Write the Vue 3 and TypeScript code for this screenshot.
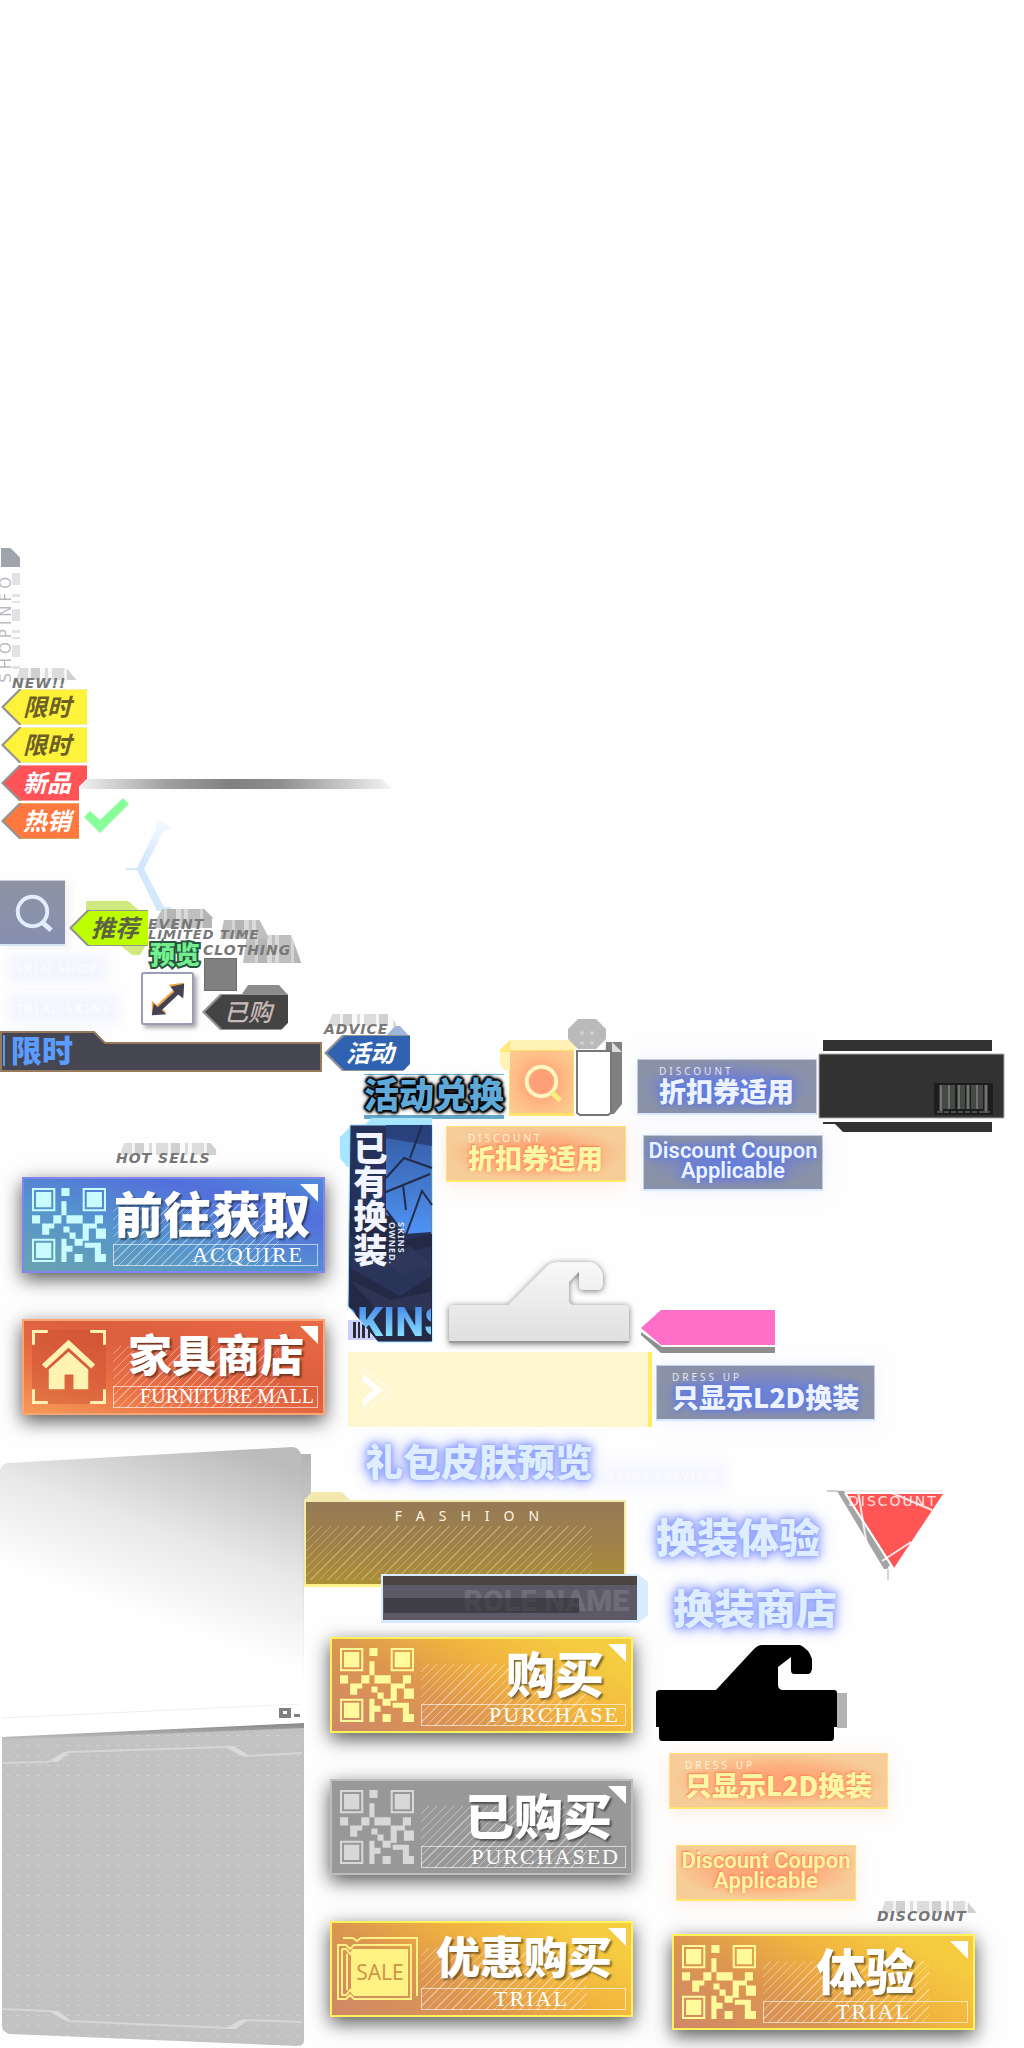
<script setup lang="ts">
interface ActionCard {
  title: string
  sub: string
  tone: 'blue' | 'red' | 'gold' | 'grey'
  emblem: 'qr' | 'home' | 'sale'
  fit: string
}

const leftCards: ActionCard[] = [
  { title: '前往获取', sub: 'ACQUIRE', tone: 'blue', emblem: 'qr', fit: 'end-near sub-far' },
  { title: '家具商店', sub: 'FURNITURE MALL', tone: 'red', emblem: 'home', fit: 'compact end-mid sub-tight' },
]
const middleCards: ActionCard[] = [
  { title: '购买', sub: 'PURCHASE', tone: 'gold', emblem: 'qr', fit: 'end-far' },
  { title: '已购买', sub: 'PURCHASED', tone: 'grey', emblem: 'qr', fit: 'end-mid' },
  { title: '优惠购买', sub: 'TRIAL', tone: 'gold', emblem: 'sale', fit: 'compact end-mid sub-center' },
]
const rightCards: ActionCard[] = [
  { title: '体验', sub: 'TRIAL', tone: 'gold', emblem: 'qr', fit: 'end-center sub-center' },
]
const cardColumns = [
  { name: 'left', cards: leftCards },
  { name: 'middle', cards: middleCards },
  { name: 'right', cards: rightCards },
]

const tags = [
  { text: '限时', tone: 'yellow' },
  { text: '限时', tone: 'yellow' },
  { text: '新品', tone: 'red' },
  { text: '热销', tone: 'orange' },
]

const coupons = [
  { place: 'coupon-a', tone: 'cool', label: 'DISCOUNT', title: '折扣券适用' },
  { place: 'coupon-b', tone: 'warm', label: 'DISCOUNT', title: '折扣券适用' },
  { place: 'coupon-c', tone: 'cool', label: '', title: 'Discount Coupon\nApplicable' },
  { place: 'coupon-d', tone: 'warm', label: '', title: 'Discount Coupon\nApplicable' },
  { place: 'coupon-e', tone: 'cool', label: 'DRESS UP', title: '只显示L2D换装' },
  { place: 'coupon-f', tone: 'warm', label: 'DRESS UP', title: '只显示L2D换装' },
]

const ghosts = [
  { place: 'g-new', text: 'NEW!!' },
  { place: 'g-event', text: 'EVENT' },
  { place: 'g-limited', text: 'LIMITED TIME' },
  { place: 'g-cloth', text: 'CLOTHING' },
  { place: 'g-advice', text: 'ADVICE' },
  { place: 'g-hot', text: 'HOT SELLS' },
  { place: 'g-discount', text: 'DISCOUNT' },
]
</script>

<template>
  <main class="sheet">
    <div class="piece shopinfo">
      <i class="notch"></i>
      <div class="shop-row"><span class="shop-text">SHOPINFO</span><i class="shop-bars"></i></div>
    </div>

    <div v-for="g in ghosts" :key="g.place" class="piece ghost" :class="g.place">
      <i class="bars"></i><span>{{ g.text }}</span>
    </div>

    <div class="piece tag-stack">
      <span v-for="(t, i) in tags" :key="i" class="tag" :class="t.tone"><b>{{ t.text }}</b></span>
    </div>

    <div class="piece fade-bar"></div>

    <svg class="piece check" viewBox="0 0 46 36" aria-hidden="true">
      <path d="M0 19 6 13 16 22 39 0 45 6 16 35z" fill="#88ff99" />
    </svg>

    <svg class="piece ribbon" viewBox="0 0 50 94" aria-hidden="true">
      <defs>
        <linearGradient id="ribbonFade" x1="0" y1="0" x2="0" y2="1">
          <stop offset="0" stop-color="#f6faff" /><stop offset=".45" stop-color="#d2e8ff" /><stop offset="1" stop-color="#d2e8ff" />
        </linearGradient>
      </defs>
      <path d="M30 1h9l7 9h-8L18 49 38 87h8l-2 4H31L11 50H0v-2h11L30 9z" fill="url(#ribbonFade)" />
    </svg>

    <button class="piece search cool" aria-label="搜索">
      <svg viewBox="0 0 64 64"><circle cx="33" cy="31" r="15" /><path d="M43 42 52 50" /></svg>
    </button>
    <button class="piece search warm" aria-label="搜索">
      <svg viewBox="0 0 64 64"><circle cx="32" cy="31" r="15" /><path d="M42 42 51 50" /></svg>
    </button>
    <svg class="piece search-edge" viewBox="0 0 76 78" aria-hidden="true">
      <path d="M0 10 10 0h66v10H10v20H4L0 24z" fill="#fff2b4" /><path d="M0 10 10 0v12H0z" fill="#ffe97a" />
    </svg>

    <svg class="piece lime-edge" viewBox="0 0 62 54" aria-hidden="true">
      <path d="M0 0h42l12 10H0zM34 44h26l-6 10h-8z" fill="#cfe97f" />
    </svg>
    <span class="piece tag lime"><b>推荐</b></span>
    <span class="piece preview">预览</span>
    <i class="piece grey-square"></i>

    <button class="piece expand" aria-label="展开">
      <svg viewBox="0 0 50 50">
        <path d="M9 41V27l5 5 17-16-5-5 16-2-1 14-5-5-17 17 5 4z" fill="#f2a54a" />
        <path d="M9 42 11 30l4 4 17-16-4-5 14-3-1 15-5-4-17 16 5 4z" fill="#434152" />
      </svg>
    </button>

    <svg class="piece bought-edge" viewBox="0 0 48 12" aria-hidden="true"><path d="M0 12 8 0h31l9 10v2z" fill="#8c8c8c" /></svg>
    <span class="piece tag dark"><b>已购</b></span>

    <p class="piece haze haze-a">SKIN SHOP</p>
    <p class="piece haze haze-b">TRIAL SKINS</p>
    <p class="piece haze haze-c">SKINS PREVIEW</p>

    <div class="piece banner">
      <svg viewBox="0 0 322 41" preserveAspectRatio="none" aria-hidden="true">
        <path d="M1 1h93l11 11h216v28H1z" fill="#464552" stroke="#97795c" stroke-width="2" />
      </svg>
      <strong>限时</strong>
    </div>

    <svg class="piece advice-edge" viewBox="0 0 25 12" aria-hidden="true"><path d="M0 11 10 0h5l10 11z" fill="#9fb6da" /></svg>
    <span class="piece tag navy"><b>活动</b></span>
    <div class="piece exchange"><strong>活动兑换</strong></div>

    <div class="piece phone">
      <svg viewBox="0 0 56 97" aria-hidden="true">
        <path d="M38 23h16v62l-8 10H36z" fill="#808080" /><path d="M44 23l10 10H44z" fill="#ddd" />
        <path d="M0 10 10 0h18l10 10v10L28 30H10L0 20z" fill="#bababa" />
        <g fill="#cfcfcf"><circle cx="14" cy="14" r="2" /><circle cx="24" cy="14" r="2" /><circle cx="14" cy="24" r="2" /><circle cx="24" cy="24" r="2" /></g>
        <path d="M9 32h34v62l-3 2H12l-3-2z" fill="#fff" stroke="#777" stroke-width="2" />
      </svg>
    </div>

    <button v-for="c in coupons" :key="c.place" class="piece coupon" :class="[c.place, c.tone, { latin: !c.label }]">
      <small v-if="c.label">{{ c.label }}</small>
      <b>{{ c.title }}</b>
    </button>

    <svg class="piece plate" viewBox="0 0 186 93" aria-hidden="true">
      <path d="M4 0h169v11H4zM4 82h169v10H24l-8-8H4z" fill="#323232" />
      <path d="M0 14h185v64H0z" fill="#323232" stroke="#aaa" stroke-width="1" />
      <path d="M115 43h59v32h-59z" fill="#1d1d1d" />
      <path d="M122 45v28M130 45v24M140 45v24M149 45v24M158 45v24M167 45v28" stroke="#70736f" stroke-width="3" />
      <path d="M126 45v24M134 45v24M144 45v24M154 45v24M162 45v24" stroke="#464a46" stroke-width="4" />
      <path d="M118 72h53" stroke="#4a4f4a" stroke-width="2" stroke-dasharray="5 2" />
    </svg>

    <section class="piece owned">
      <svg class="owned-art" viewBox="0 0 92 224" aria-hidden="true">
        <defs>
          <linearGradient id="sky" x1="0" y1="0" x2="0" y2="1"><stop offset="0" stop-color="#34599f" /><stop offset="1" stop-color="#4f93f5" /></linearGradient>
        </defs>
        <path d="M0 19 12 7h13l6-7h61v7H10v42H7L0 40z" fill="#a8e5ff" />
        <path d="M10 7h82v217H38L8 192z" fill="#25315b" stroke="#9adfff" stroke-width="1" />
        <path d="M46 7h45v107l-27 2-18-17z" fill="url(#sky)" />
        <path d="M46 20 92 28V7H46zM36 60h9v40h-9z" fill="#263a70" opacity=".8" />
        <path d="M46 60 64 40 92 50M46 74l44-18M63 67l3 25M66 117 82 73l10 14M46 92l20 26M70 40l12-33" stroke="#222b4a" stroke-width="2" fill="none" />
        <path d="M10 90 50 98l16 24 26-6v107H38L10 190z" fill="#242a46" />
        <path d="M10 120 44 142 91 128v30L60 178 10 150z" fill="#2d3961" opacity=".7" />
        <path d="M44 142 70 128l21 20-30 8zM10 162l40 20 41-8v20l-56-5z" fill="#333c5d" opacity=".6" />
      </svg>
      <h2>已有换装</h2>
      <p>SKINS<br>OWNED.</p>
      <div class="skins"><span>SKINS</span></div>
      <svg class="owned-code" viewBox="0 0 30 36" aria-hidden="true">
        <path d="M0 0 30 36H0z" fill="#fff" /><path d="M0 14h12l16 20H0z" fill="#ccd0ff" />
        <path d="M5 16v16h3V16zm5 0v16h2V16zm4 2v14h3V20zm6 6v8h2v-8z" fill="#2b2d35" />
      </svg>
    </section>

    <svg class="piece hanger pale" viewBox="0 0 180 82" aria-hidden="true">
      <defs>
        <linearGradient id="metal" x1="0" y1="0" x2="0" y2="1"><stop offset="0" stop-color="#f8f8f8" /><stop offset="1" stop-color="#dfdfdf" /></linearGradient>
      </defs>
      <path d="M3 44H59L99 4q4-3 9-3h34q8 2 12 12v11q-1 5-5 5h-16q-3 0-3-4V11L120 21v18q0 4 4 5h53q3 0 3 3v34H0V47q0-3 3-3z" fill="url(#metal)" />
      <path d="M0 81h180" stroke="#999" stroke-width="2" />
    </svg>
    <svg class="piece hanger black" viewBox="0 0 192 97" aria-hidden="true">
      <path d="M181 48h10v35h-10z" fill="#b3b3b3" />
      <path d="M4 45H60L98 4q4-4 8-4h38q9 4 12 14v10q-1 5-4 5h-14q-3 0-3-4V12L122 22v18q0 4 4 5h52q3 0 3 3v34h-3v10q0 4-3 4H6q-3 0-3-4V82H0V48q0-3 4-3z" fill="#000" />
    </svg>

    <svg class="piece pink" viewBox="0 0 135 44" aria-hidden="true">
      <path d="M0 18 20 0h114v35H20z" fill="#ff6fc8" />
      <path d="M0 22v3L20 43h114v-6H21z" fill="#8e8e8e" />
    </svg>

    <div class="piece arrow-panel">
      <svg viewBox="0 0 30 48" aria-hidden="true"><path d="M1 7 21 23 1 40V32L12 23 1 14z" fill="#fff" /><path d="M1 1 29 24 1 47" fill="none" stroke="#fff" /></svg>
    </div>

    <h2 class="piece glow glow-gift">礼包皮肤预览</h2>
    <h2 class="piece glow glow-trial">换装体验</h2>
    <h2 class="piece glow glow-shop">换装商店</h2>

    <svg class="piece warning" viewBox="0 0 118 92" aria-hidden="true">
      <path d="M0 1h116" stroke="#ddd" />
      <path d="M20 4h96L67 78z" fill="#ff5555" />
      <path d="M10 1h7l46 74-3 4h-3z" fill="#a4a4a4" />
      <path d="M31 1 38 44 41 58M65 3 105 20M55 71 84 52" stroke="#fff" stroke-width="2" fill="none" opacity=".85" />
      <path d="M0 1h10M61 79v11" stroke="#aaa" fill="none" />
      <path d="M18 3 66 78" stroke="#fff" stroke-width="2" />
    </svg>
    <span class="piece warning-text">DISCOUNT</span>

    <section class="piece drawer">
      <svg viewBox="0 0 312 606" aria-hidden="true">
        <defs>
          <linearGradient id="lid" x1=".75" y1="0" x2=".45" y2=".75"><stop offset="0" stop-color="#bcbcbc" /><stop offset=".45" stop-color="#e8e8e8" /><stop offset=".85" stop-color="#fff" /></linearGradient>
          <linearGradient id="lidBack" x1="0" y1="0" x2="0" y2="1"><stop offset="0" stop-color="#b5b5b5" /><stop offset=".55" stop-color="#e2e2e2" /><stop offset="1" stop-color="#fff" /></linearGradient>
          <linearGradient id="lidDrop" x1="0" y1="0" x2="0" y2="1"><stop offset="0" stop-color="#858585" /><stop offset="1" stop-color="#c2c2c2" /></linearGradient>
          <pattern id="dots" width="10" height="10" patternUnits="userSpaceOnUse"><rect width="10" height="10" fill="#c2c2c2" /><rect x="7" y="9" width="2" height="1" fill="#dadada" /></pattern>
        </defs>
        <path d="M296 8h15v46h-7v200h-8z" fill="url(#lidBack)" />
        <path d="M0 24q2-6 8-7L292 1q7 0 9 8l3 251L0 274z" fill="url(#lid)" />
        <path d="M2 288 304 276V594q0 6-7 6L10 588q-8-2-8-8z" fill="url(#dots)" />
        <path d="M2 288 304 277v5L2 294z" fill="url(#lidDrop)" />
        <path d="M2 272 300 259q4 0 4 4v14L2 291z" fill="#fff" />
        <path d="M2 272 300 258" stroke="#eee" />
        <path d="M279 262h12v10h-12zM294 268h6v3h-6z" fill="#808080" /><path d="M283 265h4v3h-4z" fill="#fff" />
        <g fill="none" stroke="#d5d5d5" stroke-width="2">
          <path d="M2 317 48 316 68 306 226 301 244 310 302 307" /><path d="M2 563 50 565 68 575 228 582 244 574 302 576" />
        </g>
        <path d="M50 316 64 306h6l-12 10zM226 300h8l14 9h-8zM50 565h8l12 9h-6zM226 583l14-9h8l-12 9z" fill="#dadada" />
      </svg>
    </section>

    <section class="piece fashion">
      <svg class="fashion-tab" viewBox="0 0 322 10" preserveAspectRatio="none" aria-hidden="true"><path d="M0 10V8L8 0h30l8 8h276v2z" fill="#f3e8ae" /></svg>
      <span>FASHION</span>
    </section>
    <section class="piece role">
      <svg viewBox="0 0 267 49" preserveAspectRatio="none" aria-hidden="true"><path d="M0 0h257l10 8v33l-10 8H0z" fill="#d9ebff" /></svg>
      <div><strong>ROLE NAME</strong><i></i></div>
    </section>

    <div v-for="col in cardColumns" :key="col.name" class="piece column" :class="col.name">
      <button v-for="card in col.cards" :key="card.title" class="card" :class="[card.tone, card.fit]">
        <svg v-if="card.emblem === 'qr'" class="emblem" viewBox="0 0 73 73" fill="currentColor" aria-hidden="true">
          <path fill-rule="evenodd" d="M0 0h23v23H0zM2 2v19h19V2zM4 4h15v15H4zM50 0h23v23H50zM52 2v19h19V2zM54 4h15v15H54zM0 50h23v23H0zM2 52v19h19V52zM4 54h15v15H4z" />
          <path d="M29 0h8v8h-8zM29 13h5v14h-5zM0 27h8v8H0zM21 27h8v8h-8zM34 27h16v8H34zM62 27h8v8h-8zM10 35h12v5h-5v6h-7zM31 38h6v6h-6zM37 44h6v6h-6zM50 35h14v5h-8v12h-6zM42 50h8v7h-8zM63 40h10v10H63zM29 50h5v7h6v6h-6v10h-5zM42 65h8v8h-8zM52 54h16v11h5v8H62V59H52z" />
        </svg>
        <svg v-else-if="card.emblem === 'home'" class="emblem" viewBox="0 0 75 75" fill="currentColor" aria-hidden="true">
          <path d="M0 0h75v75H0z" fill="#bf4529" opacity=".35" />
          <path d="M0 0h16v3H3v12H0zM59 0h16v15h-3V3H59zM0 60h3v12h13v3H0zM72 60h3v15H59v-3h13z" />
          <path d="M37 10 64 35l-4 4-23-21-23 21-4-4zM37 22 57 40v20H42V45h-9v15H17V40z" />
        </svg>
        <span v-else class="emblem ticket">
          <svg viewBox="0 0 82 64" fill="none" stroke="currentColor" stroke-width="2" aria-hidden="true">
            <path d="M6 1h10l4 3 4-3h56v58M1 8h8l4 4 4-4h57v54H17l-4-4-4 4H1zM5 12h4l4 5 4-5M5 12v46h4l4-5 4 5M10 17v36" />
            <path d="M15 12h56v47H17l-3-5V18z" fill="currentColor" stroke="none" />
          </svg>
          <em>SALE</em>
        </span>
        <span class="copy"><b>{{ card.title }}</b><small>{{ card.sub }}</small></span>
      </button>
    </div>
  </main>
</template>

<style>
body { margin: 0; background: #fefefe; }
</style>

<style scoped>
.sheet {
  position: relative;
  min-height: 100vh;
  overflow: hidden;
  font-family: "Noto Sans", "Noto Sans CJK SC", sans-serif;
}
/* Free canvas: every piece has its own spot on the sheet. */
.piece { position: absolute; margin: 0; }
button { border: 0; padding: 0; margin: 0; font: inherit; cursor: pointer; }
svg { display: block; overflow: visible; }

.shopinfo { left: 0; top: 548px; width: 20px; display: flex; flex-direction: column; gap: 6px; }
.notch { height: 19px; margin-left: 1px; background: #9fa3ab; clip-path: polygon(0 0, 50% 0, 100% 50%, 100% 100%, 0 100%); }
.shop-row { display: flex; }
.shop-text {
  writing-mode: vertical-rl; transform: rotate(180deg); width: 12px; line-height: 12px;
  font-family: "DejaVu Sans", sans-serif; font-size: 15px; letter-spacing: 4px; color: #b8b8c0;
}
.shop-bars { width: 8px; height: 96px; background: repeating-linear-gradient(180deg, #e3e3e6 0 12px, transparent 12px 21px, #e3e3e6 21px 24px, transparent 24px 28px, #e3e3e6 28px 30px, transparent 30px 36px); }

.ghost { font: italic 700 14px/10px "DejaVu Sans", sans-serif; letter-spacing: 1px; color: #777; white-space: nowrap; padding: 10px 10px 0 0; }
.ghost span { position: relative; }
.bars {
  position: absolute; inset: 0 0 auto 4px; height: 12px;
  background: repeating-linear-gradient(90deg, #dcdcdc 0 12px, #f4f4f4 12px 15px, #d0d0d0 15px 24px, #fafafa 24px 29px, #dcdcdc 29px 32px, #fafafa 32px 36px);
  clip-path: polygon(4px 0, calc(100% - 10px) 0, 100% 100%, 0 100%);
}
.g-new { left: 12px; top: 668px; }
.g-event { left: 148px; top: 909px; z-index: 2; }
.g-limited { left: 148px; top: 920px; z-index: 2; }
.g-limited.ghost { font-size: 13px; }
.g-cloth { left: 203px; top: 935px; }
.g-event .bars, .g-cloth .bars, .g-limited .bars { height: 19px; filter: brightness(.87); }
.g-event .bars { clip-path: polygon(10px 0, calc(100% - 10px) 0, 100% 10px, 60px 10px, 60px 100%, 0 100%); }
.g-limited .bars { left: 72px; }
.g-cloth .bars { left: 40px; height: 28px; }
.g-advice { left: 324px; top: 1014px; }
.g-hot { left: 116px; top: 1143px; }
.g-discount { left: 877px; top: 1901px; }

.tag-stack { left: 1px; top: 689px; display: flex; flex-direction: column; gap: 2px; }
.tag { position: relative; width: 86px; height: 36px; box-sizing: border-box; display: flex; align-items: center; padding-left: 22px; background: #929292; clip-path: polygon(18px 0, 100% 0, 100% 100%, 18px 100%, 0 50%); isolation: isolate; font-size: 24px; line-height: 34px; font-style: italic; }
.tag.piece { position: absolute; }
.tag::before { content: ""; position: absolute; inset: 1px 0 1px 3px; background: var(--fill); clip-path: polygon(17px 0, 100% 0, 100% 100%, 17px 100%, 0 50%); z-index: -1; }
.tag b { font-weight: 700; color: var(--ink); }
.tag.yellow { --fill: #fff23a; --ink: #6b6128; background: linear-gradient(90deg, #929292 20px, #f2eda6 20px); }
.tag.red { --fill: #ff5357; --ink: #fff; background: linear-gradient(90deg, #929292 20px, #ff9da0 20px); clip-path: polygon(18px 0, 100% 0, 100% 38%, 78px 60%, 78px 100%, 18px 100%, 0 50%); }
.tag.orange { --fill: #ff7840; --ink: #fff; width: 78px; background: linear-gradient(90deg, #929292 20px, #dca85a 20px); }
.tag.lime { --fill: #bdff00; --ink: #5d6342; left: 69px; top: 910px; width: 79px; }
.tag.dark { --fill: #444; --ink: #c9b9b9; left: 202px; top: 994px; clip-path: polygon(18px 0, 100% 0, 100% 80%, 79px 100%, 18px 100%, 0 50%); }
.tag.dark b { font-weight: 500; }
.tag.navy { --fill: #2f62b0; --ink: #fff; left: 324px; top: 1035px; clip-path: polygon(18px 0, 100% 0, 100% 80%, 79px 100%, 18px 100%, 0 50%); }
.lime-edge { left: 86px; top: 901px; width: 62px; height: 54px; }
.bought-edge { left: 240px; top: 985px; width: 48px; height: 12px; }
.advice-edge { left: 385px; top: 1026px; width: 25px; height: 12px; }

.fade-bar { left: 79px; top: 779px; width: 313px; height: 10px; background: linear-gradient(90deg, #f2f2f2, #a0a0a0 28%, #808080 49%, #909090 65%, #f4f4f4); clip-path: polygon(9px 0, 303px 0, 100% 100%, 0 100%); }
.check { left: 84px; top: 798px; width: 46px; height: 36px; }
.ribbon { left: 126px; top: 820px; width: 50px; height: 94px; }

.search { width: 65px; height: 66px; box-sizing: border-box; }
.search svg { width: 63px; height: 63px; fill: none; stroke-width: 4; }
.search path { stroke-width: 5; }
.search.cool { left: 0; top: 880px; background: linear-gradient(#8d93a3, #878fb0); stroke: #e2edff; border-top: 1px solid #ccd; border-bottom: 2px solid #cfe8f5; box-shadow: 6px 2px 6px #0000000c; }
.search.warm { left: 509px; top: 1050px; background: radial-gradient(#ff9f78 20%, #ffbd86 60%, #f8cf94); border: 1px solid #ffdf6a; border-bottom: 3px solid #ffe566; stroke: #fff6c0; }
.search.warm path { stroke: #f4f07a; }
.search-edge { left: 500px; top: 1040px; width: 76px; height: 78px; }

.preview { left: 150px; top: 936px; z-index: 3; font-size: 25px; line-height: 36px; font-weight: 900; color: #72f08f; -webkit-text-stroke: 4px #2c5540; paint-order: stroke fill; }
.grey-square { left: 204px; top: 958px; width: 31px; height: 31px; background: #808080; border: 1px solid #6d6d6d; }
.expand { left: 141px; top: 972px; width: 53px; height: 53px; background: #fff; border: 2px solid #9a9cba; border-radius: 3px; box-shadow: 3px 3px 4px #0005; box-sizing: border-box; }

.haze { font: 700 12px/14px "Noto Sans", sans-serif; letter-spacing: 2px; color: #f6f8ff; background: #e9ecff; box-shadow: 0 0 12px 8px #e9ecff; opacity: .45; white-space: nowrap; }
.haze-a { left: 16px; top: 962px; }
.haze-b { left: 16px; top: 1002px; }
.haze-c { left: 608px; top: 1469px; font-size: 11px; opacity: .35; }

.banner { left: 0; top: 1031px; width: 322px; height: 41px; }
.banner svg { width: 100%; height: 100%; }
.banner strong { position: absolute; left: 3px; top: 4px; border-left: 2px solid #5b9cff; padding-left: 6px; font-size: 31px; line-height: 31px; font-weight: 900; color: #5b9cff; }

.exchange { left: 364px; top: 1074px; height: 45px; box-sizing: border-box; border-top: 1px solid #6db7e0; border-bottom: 4px solid #64a8cc; background: #fff; }
.exchange strong { font-size: 35px; line-height: 39px; font-weight: 900; color: #5fa9d8; text-shadow: 0 0 3px #000, 0 0 3px #000, 0 0 6px #000, 1px 1px 2px #000, -1px -1px 2px #000, 2px 0 2px #000, -2px 0 2px #000, 0 2px 3px #000, 0 -2px 3px #000; }
.phone { left: 568px; top: 1019px; width: 56px; height: 97px; }

.coupon { width: 180px; height: 56px; box-sizing: border-box; display: flex; flex-direction: column; align-items: flex-start; justify-content: center; padding: 0 0 2px 21px; text-align: left; white-space: pre; }
.coupon small { font: 400 10px/10px "Noto Sans", sans-serif; letter-spacing: 3px; color: #e8eaf2; }
.coupon b { font: 900 27px/30px "Noto Sans CJK SC", sans-serif; }
.coupon.cool { background: radial-gradient(closest-side, #6f85d6, #8089be 60%, #8a92a8); border: 1px solid #c3cbe6; border-bottom: 2px solid #d8e9ff; color: #ecf3ff; box-shadow: 0 0 14px #e3e6ff88; }
.coupon.cool b { text-shadow: 0 0 5px #5b79e6, 0 0 9px #5b79e6; }
.coupon.warm { background: radial-gradient(closest-side, #ffa074, #fdb07f 55%, #f6cd98); border: 1px solid #fde07a; border-bottom: 2px solid #ffe76a; color: #faf8a4; box-shadow: 0 4px 18px #ff9a7033; }
.coupon.warm b { text-shadow: -1px -1px 1px #ff8858, 0 0 4px #ff9868; }
.coupon.warm small { color: #fff3d8; }
.coupon.latin { padding: 0 0 3px; align-items: center; text-align: center; }
.coupon.latin b { font: 600 22px/20px Roboto, "Liberation Sans", sans-serif; }
.coupon-a { left: 637px; top: 1059px; }
.coupon-b { left: 446px; top: 1126px; }
.coupon-c { left: 643px; top: 1135px; }
.coupon-d { left: 676px; top: 1845px; }
.coupon.coupon-e, .coupon.coupon-f { width: 219px; padding-left: 15px; }
.coupon-e { left: 656px; top: 1365px; }
.coupon-f { left: 669px; top: 1753px; }

.plate { left: 819px; top: 1040px; width: 186px; height: 93px; }

.owned { left: 340px; top: 1118px; width: 92px; height: 224px; }
.owned-art { width: 100%; height: 100%; }
.owned h2 { position: absolute; margin: 0; left: 12px; top: 13px; writing-mode: vertical-rl; font-size: 34px; line-height: 34px; font-weight: 900; color: #f2f5ff; }
.owned p { position: absolute; margin: 0; left: 48px; top: 104px; writing-mode: vertical-rl; font: 700 9px/9px "Noto Sans", sans-serif; letter-spacing: 1px; color: #dfe4f5; }
.skins { position: absolute; left: 10px; right: 1px; bottom: 3px; height: 36px; overflow: hidden; display: flex; justify-content: center; }
.skins span { font: 800 41px/38px Roboto, sans-serif; background: linear-gradient(#3f80e8, #8fe8ff); background-clip: text; color: transparent; }
.owned-code { position: absolute; left: 8px; bottom: 0; width: 30px; height: 36px; }

.hanger.pale { left: 449px; top: 1261px; width: 180px; height: 82px; filter: drop-shadow(0 1px 3px #0008); }
.hanger.black { left: 656px; top: 1645px; width: 192px; height: 97px; }
.pink { left: 641px; top: 1310px; width: 135px; height: 44px; }
.arrow-panel { left: 348px; top: 1352px; width: 304px; height: 75px; box-sizing: border-box; background: #fff7cf; border-right: 4px solid #ffed60; padding: 15px 14px; }
.arrow-panel svg { width: 30px; height: 48px; }

.glow { font: 900 41px/44px "Noto Sans CJK SC", sans-serif; white-space: nowrap; color: #dfeeff; text-shadow: 0 0 3px #8fa2ff, 0 0 8px #8fa0ff, 0 0 12px #97a6ff, 0 0 18px #a9b5ff; }
.glow.glow-gift { left: 365px; top: 1438px; font-size: 38px; }
.glow-trial { left: 656px; top: 1513px; }
.glow-shop { left: 673px; top: 1584px; }

.warning { left: 827px; top: 1490px; width: 118px; height: 92px; }
.warning-text { left: 848px; top: 1494px; font: 400 14px/14px "DejaVu Sans", sans-serif; letter-spacing: 2px; color: #ffe1e1; }

.drawer { left: 0; top: 1446px; width: 312px; height: 602px; overflow: hidden; }
.drawer svg { width: 312px; height: 606px; }

.fashion { left: 304px; top: 1500px; width: 322px; height: 87px; box-sizing: border-box; border: 2px solid #f4eba0; border-bottom: 3px solid #fff28a; padding: 7px 0 0 18px; text-align: center;
  background: repeating-linear-gradient(135deg, transparent 0 5px, #e0d29a77 5px 6px) 0 24px / 286px 54px no-repeat, linear-gradient(#967a56, #9f8049 50%, #ac8f37); }
.fashion-tab { position: absolute; left: -2px; top: -10px; width: 322px; height: 10px; }
.fashion span { display: block; font: 400 14px/14px "Noto Sans", sans-serif; letter-spacing: 14px; color: #fdf6e6; }

.role { left: 381px; top: 1574px; width: 267px; height: 49px; }
.role svg { width: 100%; height: 100%; }
.role div { position: absolute; inset: 2px 11px 3px 2px; background: linear-gradient(#4c4443 9px, #5d5a67 9px); display: flex; align-items: center; justify-content: flex-end; padding-right: 8px; }
.role i { position: absolute; left: 1px; top: 22px; width: 195px; height: 15px; background: #2c2c3099; }
.role strong { font: 900 30px/40px Roboto, sans-serif; color: #706c7a; padding-top: 6px; }

.column { display: flex; flex-direction: column; gap: 46px; }
.column.left { left: 22px; top: 1177px; }
.column.middle { left: 330px; top: 1637px; }
.column.right { left: 672px; top: 1934px; }
.card { position: relative; width: 303px; height: 96px; box-sizing: border-box; border: 2px solid; padding: 5px; display: flex; align-items: center; justify-content: space-between; color: #fff; box-shadow: 0 6px 18px #000a; }
.card::after { content: ""; position: absolute; right: 5px; top: 5px; width: 18px; height: 18px; background: #fff; clip-path: polygon(0 0, 100% 0, 100% 100%); }
.emblem { width: 74px; height: 74px; margin-left: 3px; flex: none; }
.copy { flex: none; width: 205px; height: 82px; display: flex; flex-direction: column; background: repeating-linear-gradient(135deg, transparent 0 5px, #fff6 5px 6px) 0 20px / 166px 62px no-repeat; }
.copy b { height: 60px; font: 900 49px/56px "Noto Sans CJK SC", sans-serif; text-align: right; text-shadow: 2px 2px 2px #0007; white-space: nowrap; }
.copy small { box-sizing: border-box; height: 22px; border: 1px solid #fff9; font: 400 22px/19px "Liberation Serif", serif; letter-spacing: 2px; text-align: right; padding-right: 5px; white-space: nowrap; }
.compact .copy b { font-size: 44px; line-height: 54px; }
.end-near b { padding-right: 8px; }
.end-mid b { padding-right: 14px; }
.end-far b { padding-right: 22px; }
.end-center .copy b { text-align: center; }
.sub-far .copy small { padding-right: 13px; }
.sub-tight .copy small { font-size: 20px; letter-spacing: 0; padding-right: 3px; }
.sub-center .copy small { text-align: center; padding: 0 0 0 16px; }
.card.blue { background: linear-gradient(15deg, #69a3b0, #5594cd 40%, #536fdc 75%, #4e8bd8); border-color: #8285ee; }
.card.blue .emblem { color: #c8fcff; }
.card.red { background: linear-gradient(15deg, #f79a58, #ea7045 30%, #dc5f3e 60%, #e96a45); border-color: #ffa574; }
.card.red .emblem { color: #fff3b4; }
.card.gold { background: linear-gradient(30deg, #cf8768, #dd964f 35%, #f1b33f 60%, #f5cb40 85%); border-color: #fff25a; }
.card.gold .emblem { color: #fffb9c; }
.card.grey { background: #989898; border-color: #bdbdbd; }
.card.grey .emblem { color: #d8d8d8; }
.card .emblem.ticket { position: relative; width: 82px; height: 64px; margin: 0; display: grid; place-items: center; color: #fff285; }
.ticket svg { grid-area: 1 / 1; width: 82px; height: 64px; }
.ticket em { grid-area: 1 / 1; position: relative; font: 400 21px/24px "Noto Sans", sans-serif; color: #cf9548; padding: 6px 0 0 4px; }
</style>
